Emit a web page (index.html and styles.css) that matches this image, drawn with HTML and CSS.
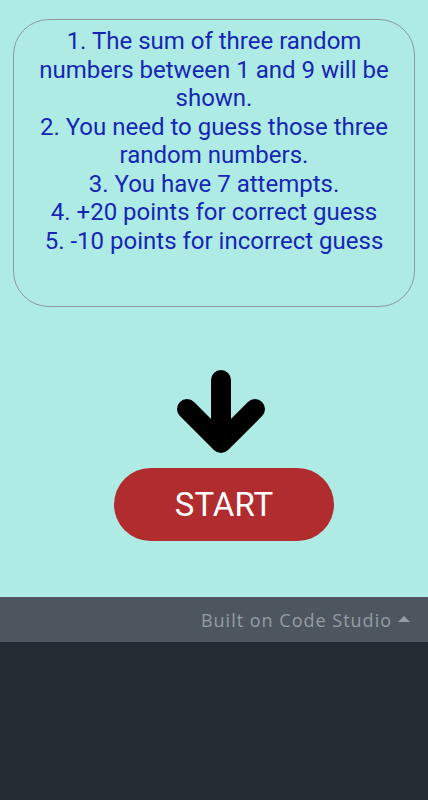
FILE: index.html
```html
<!DOCTYPE html>
<html lang="en">

<head>
    <meta charset="UTF-8">
    <meta name="viewport" content="width=device-width, initial-scale=1.0">
    <title>Guess The Numbers</title>
    <link rel="stylesheet" href="styles.css">
</head>

<body>

    <div class="app">
        <div class="rules">
            1. The sum of three random<br>
            numbers between 1 and 9 will be<br>
            shown.<br>
            2. You need to guess those three<br>
            random numbers.<br>
            3. You have 7 attempts.<br>
            4. +20 points for correct guess<br>
            5. -10 points for incorrect guess
        </div>

        <div class="arrow">
            <svg width="100" height="90" viewBox="0 0 100 90">
                <path d="M50 14 V77 M16 43 L50 77 L84 43" fill="none" stroke="#000" stroke-width="20"
                    stroke-linecap="round" stroke-linejoin="round" />
            </svg>
        </div>

        <button class="start-btn">START</button>
    </div>

    <div class="footer">
        <span class="built-on">Built on Code Studio</span>
        <span class="caret"></span>
    </div>

</body>

</html>
```

FILE: styles.css
```css
body {
    margin: 0;
    font-family: Roboto, "Noto Sans", sans-serif;
    background-color: #232b33;
}

.app {
    height: 597px;
    background-color: #aeebe4;
    padding: 19px 13px 0;
    box-sizing: border-box;
}

.rules {
    height: 288px;
    box-sizing: border-box;
    border: 1.5px solid #8b9a99;
    border-radius: 36px;
    padding: 7px 0 0;
    text-align: center;
    white-space: nowrap;
    color: #1626b4;
    font-size: 24px;
    line-height: 28.5px;
}

.arrow {
    display: flex;
    margin-top: 59px;
    padding-left: 158px;
}

.start-btn {
    display: block;
    margin: 12px 0 0 101px;
    width: 220px;
    height: 73px;
    border: none;
    border-radius: 37px;
    background-color: #b12c2f;
    color: #fff;
    font-family: Roboto, "Noto Sans", sans-serif;
    font-size: 33px;
    padding: 0;
}

.footer {
    height: 45px;
    background-color: #4d565e;
    display: flex;
    align-items: center;
    justify-content: flex-end;
    padding-right: 18px;
    gap: 6px;
}

.built-on {
    color: #959ca3;
    font-family: "Open Sans", sans-serif;
    font-size: 18px;
    letter-spacing: 1px;
}

.caret {
    width: 0;
    height: 0;
    border-left: 6px solid transparent;
    border-right: 6px solid transparent;
    border-bottom: 6px solid #959ca3;
    margin-top: -2px;
}
```
